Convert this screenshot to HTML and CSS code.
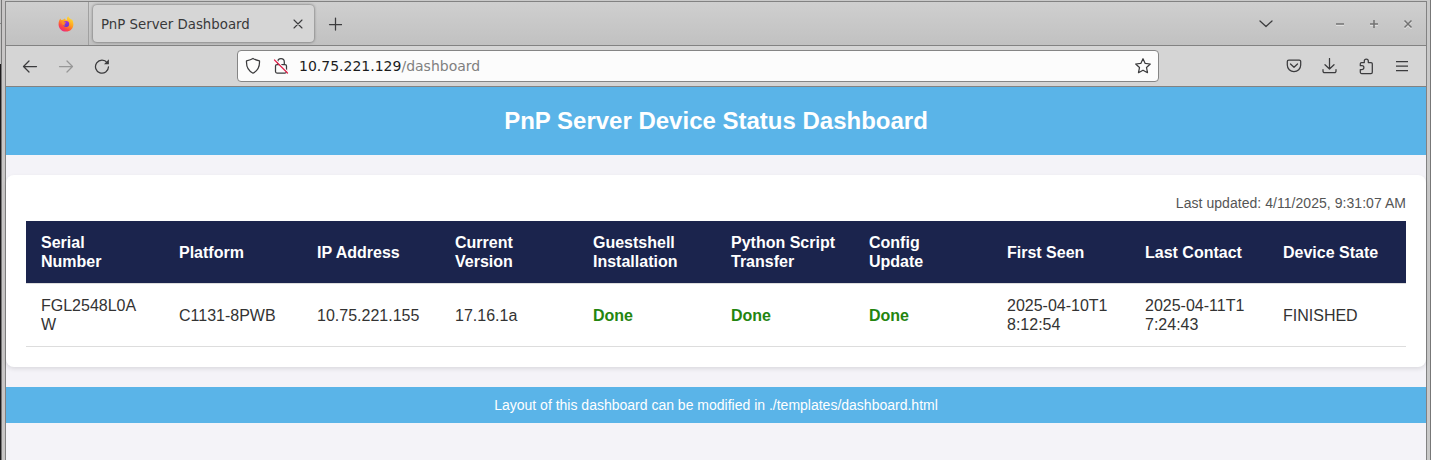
FILE: index.html
```html
<!DOCTYPE html>
<html lang="en">
<head>
<meta charset="utf-8">
<title>PnP Server Dashboard</title>
<link rel="stylesheet" href="styles.css">
</head>
<body>
<div class="desktop-edge"></div>
<div class="window">
  <div class="tabbar">
    <div class="pinned">
      <svg width="16" height="16" viewBox="0 0 16 16">
        <defs>
          <linearGradient id="flame" x1="0.85" y1="0" x2="0.25" y2="1"><stop offset="0" stop-color="#ffe83c"/><stop offset=".45" stop-color="#ffa21f"/><stop offset=".75" stop-color="#ff4b3e"/><stop offset="1" stop-color="#e8258a"/></linearGradient>
          <linearGradient id="globe" x1="0" y1="0" x2="0" y2="1"><stop offset="0" stop-color="#a82be0"/><stop offset="1" stop-color="#5b35dc"/></linearGradient>
        </defs>
        <path fill="url(#flame)" d="M10.2 0.2 C10.8 1.8 12.2 2.2 13 3.4 L14 3.6 C15 5 15.4 6.6 15.4 8.2 C15.4 12.4 12.2 15.6 8 15.6 C3.8 15.6 0.6 12.4 0.6 8.4 C0.6 6 1.2 4.2 2.4 2.6 L3 3.9 L5 3.7 L6.8 2.4 L7.8 4 L9.2 4 C8.6 2.5 9.2 1 10.2 0.2 Z"/>
        <circle cx="8.2" cy="8" r="3" fill="url(#globe)"/>
        <path fill="#ff8a26" d="M3.6 6 C4.6 5.3 5.8 5.6 6.6 6.2 L8.1 6.5 C8 7.2 7.3 7.5 6.7 7.7 C6.4 8.5 6.8 9.1 7.6 9.3 C5.9 10 3.7 8.7 3.6 6 Z"/>
      </svg>
    </div>
    <div class="tab">
      <span class="tab-title">PnP Server Dashboard</span>
      <svg width="10" height="10" viewBox="0 0 10 10" class="line tab-close"><path d="M1 1l8 8M9 1L1 9"/></svg>
    </div>
    <svg class="line new-tab" width="14" height="14" viewBox="0 0 14 14"><path d="M7.500 1v12M1.500 7.500h12"/></svg>
    <svg class="line list-tabs" width="14" height="8" viewBox="0 0 14 8"><path d="M1 1l6 5.500L13 1"/></svg>
    <svg class="control minimize" width="10" height="10" viewBox="0 0 10 10"><path class="lite" d="M1 6h8"/><path d="M1 5h8"/></svg>
    <svg class="control maximize" width="10" height="10" viewBox="0 0 10 10"><path class="lite" d="M1 6h8"/><path d="M1 5h8M5 1v8"/></svg>
    <svg class="control close" width="10" height="10" viewBox="0 0 10 10"><path class="lite" d="M1.500 2.500l7 7M8.500 2.500l-7 7"/><path d="M1.500 1.500l7 7M8.500 1.500l-7 7"/></svg>
  </div>
  <div class="toolbar">
    <svg class="line back" width="16" height="16" viewBox="0 0 16 16"><path d="M14.500 8.500H1.500M7 3L1.500 8.500 7 14"/></svg>
    <svg class="line forward" width="16" height="16" viewBox="0 0 16 16"><path d="M1.500 8.500h13M9 3L14.500 8.500 9 14"/></svg>
    <svg class="line reload" width="16" height="16" viewBox="0 0 16 16"><path d="M13.200 4.800A6.500 6.500 0 1 0 14.500 8.800"/><path class="solid" d="M14.900 1.300v4.900H10z"/></svg>
    <div class="urlbar">
      <svg class="line shield" width="16" height="18" viewBox="0 0 16 18"><path d="M8 1.500C6.300 2.600 4 3.300 1.500 3.900c-.3 5.400 1.800 10 6.500 12.300 4.700-2.300 6.800-6.900 6.500-12.300C12 3.300 9.700 2.600 8 1.500z"/></svg>
      <svg class="line lock" width="16" height="18" viewBox="0 0 16 18"><path d="M4.700 7.500V5a3.300 3.300 0 0 1 6.600 0v2.500M4 7.500h8a1.500 1.500 0 0 1 1.500 1.500v5.500A1.500 1.500 0 0 1 12 16H4a1.500 1.500 0 0 1-1.500-1.500V9A1.500 1.500 0 0 1 4 7.500z"/><path class="halo" d="M2.200 2.200l13 13"/><path class="strike" d="M1.500 3l13 13"/></svg>
      <span class="url"><b>10.75.221.129</b>/dashboard</span>
      <svg class="line star" width="18" height="18" viewBox="0 0 18 18"><path d="M9 1.700l2.200 4.700 5.100.6-3.800 3.500 1 5.200L9 13.200l-4.500 2.500 1-5.200L1.700 7l5.100-.6z"/></svg>
    </div>
    <svg class="line pocket" width="16" height="16" viewBox="0 0 16 16"><path d="M2.800 2h10.400a1.500 1.500 0 0 1 1.500 1.500V7a6.700 6.700 0 0 1-13.400 0V3.500A1.500 1.500 0 0 1 2.800 2zM4.500 6L8 9.300 11.500 6"/></svg>
    <svg class="line download" width="16" height="16" viewBox="0 0 16 16"><path d="M7.500 .500v10.500M3 6.700L7.500 11l4.500-4.300M1 11.500v1.700a1.500 1.500 0 0 0 1.500 1.500h10a1.500 1.500 0 0 0 1.500-1.500v-1.700"/></svg>
    <svg class="line puzzle" width="16" height="17" viewBox="0 0 16 17"><path d="M3.500 15.500h9.500a1.300 1.300 0 0 0 1.300-1.300V5.800a1.300 1.300 0 0 0-1.300-1.300H10.300V3a2 2 0 0 0-4 0v1.500H3.500A1.200 1.200 0 0 0 2.300 5.700v2h1.700a1.900 1.900 0 0 1 0 3.800H2.300v2.800a1.200 1.200 0 0 0 1.200 1.200z"/></svg>
    <svg class="line menu" width="12" height="12" viewBox="0 0 12 12"><path d="M0 1.500h12M0 6h12M0 10.500h12"/></svg>
  </div>
  <div class="page">
    <header class="header"><h1>PnP Server Device Status Dashboard</h1></header>
    <main class="card">
      <div class="updated">Last updated: 4/11/2025, 9:31:07 AM</div>
      <table class="devices">
        <thead>
          <tr><th>Serial Number</th><th>Platform</th><th>IP Address</th><th>Current Version</th><th>Guestshell Installation</th><th>Python Script Transfer</th><th>Config<br>Update</th><th>First Seen</th><th>Last Contact</th><th>Device State</th></tr>
        </thead>
        <tbody>
          <tr><td>FGL2548L0AW</td><td>C1131-8PWB</td><td>10.75.221.155</td><td>17.16.1a</td><td class="done">Done</td><td class="done">Done</td><td class="done">Done</td><td>2025-04-10T18:12:54</td><td>2025-04-11T17:24:43</td><td>FINISHED</td></tr>
        </tbody>
      </table>
    </main>
    <footer class="footer">Layout of this dashboard can be modified in ./templates/dashboard.html</footer>
  </div>
</div>
<div class="right-edge"></div>
</body>
</html>
```
FILE: styles.css
```css
* { box-sizing: border-box; }
body {
  margin: 0;
  height: 460px;
  display: flex;
  overflow: hidden;
  background: #c9c9c9;
  font-family: "Liberation Sans", Arial, sans-serif;
}
svg { display: block; flex: none; }
.desktop-edge {
  width: 5px;
  border-right: 3px solid #c8c6c6;
  background: linear-gradient(90deg, transparent 1px, #777 1px),
    linear-gradient(#c4c4c4 23px, #888 23px, #888 24px, #c4c4c4 24px, #c4c4c4 64px, #1c1a1c 64px);
}
.window {
  width: 1422px;
  height: 459px;
  margin-top: 1px;
  border: 1px solid #828282;
  border-bottom: 0;
  display: flex;
  flex-direction: column;
}
.right-edge { width: 4px; border-right: 1px solid #777; }

.line { fill: none; stroke: #3b3b3d; stroke-width: 1.25; stroke-linecap: round; stroke-linejoin: round; }
.line .solid { fill: #3b3b3d; stroke: none; }

.tabbar {
  height: 44px;
  flex: none;
  display: flex;
  align-items: center;
  border-bottom: 1px solid #828282;
  background: linear-gradient(#cfcfcf, #c1c1c1);
}
.pinned {
  width: 83px;
  height: 43px;
  padding-left: 52px;
  display: flex;
  align-items: center;
  border-right: 1px solid #a0a0a0;
}
.tab {
  width: 221px;
  height: 37px;
  margin-left: 4px;
  padding: 0 11px 0 8px;
  display: flex;
  align-items: center;
  justify-content: space-between;
  border-radius: 4px;
  background: #d6d6d6;
  box-shadow: 0 0 3px rgba(0, 0, 0, .55);
  font: 13.33px "DejaVu Sans", sans-serif;
  color: #39393a;
}
.tab-title { padding-top: 2px; white-space: nowrap; }
.tab-close { stroke-width: 1.1; }
.new-tab { margin-left: 14px; }
.list-tabs { margin-left: 917px; }
.control { fill: none; stroke: #727272; stroke-width: 1.5; }
.control .lite { stroke: #e8e8e8; }
.minimize { margin-left: 62px; }
.maximize, .close { margin-left: 24px; }

.toolbar {
  height: 41px;
  flex: none;
  display: flex;
  align-items: center;
  padding-left: 16px;
  border-bottom: 1px solid #828282;
  background: #d5d5d5;
}
.forward { margin-left: 20px; stroke: #979797; }
.reload { margin-left: 20px; }
.urlbar {
  width: 922px;
  height: 32px;
  margin-left: 127px;
  padding: 0 6px 0 7px;
  display: flex;
  align-items: center;
  border: 1px solid #858585;
  border-radius: 4px;
  background: #fcfcfc;
}
.lock { margin-left: 12px; }
.lock .halo { stroke: #fcfcfc; }
.lock .strike { stroke: #e22850; }
.url { margin-left: 10px; flex: 1; font: 14px "DejaVu Sans", sans-serif; color: #808080; }
.url b { font-weight: normal; color: #1c1c1e; }
.pocket { margin-left: 127px; }
.download { margin-left: 20px; }
.puzzle { margin-left: 20px; }
.menu { margin-left: 22px; }

.page { flex: 1; background: #f4f3f8; }
.header {
  height: 68px;
  display: flex;
  align-items: center;
  justify-content: center;
  background: #5ab4e8;
  color: #fff;
}
.header h1 { margin: 0; font-size: 24px; line-height: 28px; }
.card {
  height: 192px;
  margin: 20px 0;
  padding: 20px;
  border-radius: 8px;
  background: #fff;
  box-shadow: 0 2px 4px rgba(0, 0, 0, .1);
}
.updated { height: 16px; margin-bottom: 10px; font-size: 14px; line-height: 16px; letter-spacing: .045px; text-align: right; color: #555; }
.devices { width: 100%; table-layout: fixed; border-spacing: 0; font-size: 16px; line-height: 19px; color: #333; }
.devices th, .devices td { padding: 0 15px; text-align: left; vertical-align: middle; border-bottom: 1px solid #ddd; }
.devices th { height: 63px; background: #1b244d; background-clip: padding-box; color: #fff; }
.devices td { height: 63px; word-break: break-all; }
.devices .done { font-weight: bold; color: #24850f; }
.footer { height: 36px; font-size: 14px; line-height: 36px; text-align: center; background: #5ab4e8; color: #fff; }
```
